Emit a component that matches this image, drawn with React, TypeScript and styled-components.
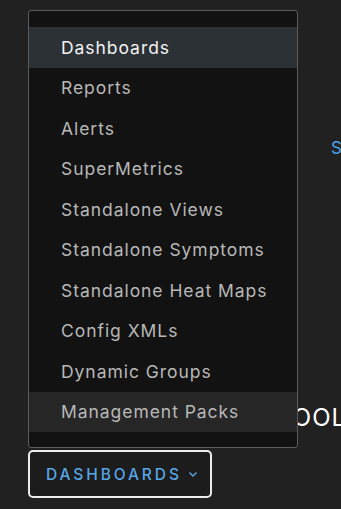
import styled, { createGlobalStyle } from 'styled-components'

const items = [
  'Dashboards',
  'Reports',
  'Alerts',
  'SuperMetrics',
  'Standalone Views',
  'Standalone Symptoms',
  'Standalone Heat Maps',
  'Config XMLs',
  'Dynamic Groups',
  'Management Packs',
]

const GlobalStyle = createGlobalStyle`
  html, body {
    margin: 0;
    background: #212121;
    font-family: Inter, 'Noto Sans', sans-serif;
  }
`

const App = () => {
  return (
    <Page>
      <GlobalStyle />
      <LinkRow>
        <a href='#'>Summary</a>
      </LinkRow>
      <Heading>TOOLS</Heading>
      <ButtonWrap>
        <Menu>
          {items.map((item, i) => (
            <MenuItem key={item} $active={i === 0} $hover={i === items.length - 1}>
              {item}
            </MenuItem>
          ))}
        </Menu>
        <ToggleButton>
          DASHBOARDS
          <svg width='10' height='10' viewBox='0 0 10 10'>
            <path d='M1.5 3.5 L5 7 L8.5 3.5' fill='none' stroke='#57a6e6' strokeWidth='1.4' />
          </svg>
        </ToggleButton>
      </ButtonWrap>
    </Page>
  )
}

export default App

const Page = styled.div`
  display: flex;
  flex-direction: column;
  align-items: flex-start;
  box-sizing: border-box;
  height: 509px;
  padding: 138px 0 0 28px;
  overflow: hidden;
`

const LinkRow = styled.div`
  padding-left: 303px;
  height: 22px;
  white-space: nowrap;
  font-size: 17px;

  a {
    color: #4aa3e8;
    text-decoration: none;
  }
`

const Heading = styled.h2`
  margin: 243px 0 0 249px;
  height: 24px;
  font-size: 24px;
  font-weight: 400;
  letter-spacing: 1px;
  line-height: 30px;
  color: #fff;
  white-space: nowrap;
`

const ButtonWrap = styled.div`
  position: relative;
  margin-top: 23px;
`

const Menu = styled.div`
  position: absolute;
  left: 0;
  bottom: calc(100% + 2px);
  width: 270px;
  box-sizing: border-box;
  padding: 16px 0 15px;
  background: #121212;
  border: 1px solid #5c5c5c;
  border-radius: 3px;
  display: flex;
  flex-direction: column;
`

const MenuItem = styled.div<{ $active?: boolean; $hover?: boolean }>`
  height: 40.5px;
  display: flex;
  align-items: center;
  padding-left: 32px;
  font-size: 17.5px;
  letter-spacing: 0.95px;
  color: ${({ $active }) => ($active ? '#f2f2f2' : '#b8b8b8')};
  background: ${({ $active, $hover }) => ($active ? '#2c3136' : $hover ? '#262626' : 'transparent')};
`

const ToggleButton = styled.button`
  display: flex;
  align-items: center;
  gap: 6px;
  box-sizing: border-box;
  width: 184px;
  height: 48px;
  padding: 0 0 0 16px;
  background: #1c1c1c;
  border: 2px solid #ececec;
  border-radius: 5px;
  color: #57a6e6;
  font-family: Inter, 'Noto Sans', sans-serif;
  font-size: 15.5px;
  font-weight: 500;
  letter-spacing: 2.9px;
`
